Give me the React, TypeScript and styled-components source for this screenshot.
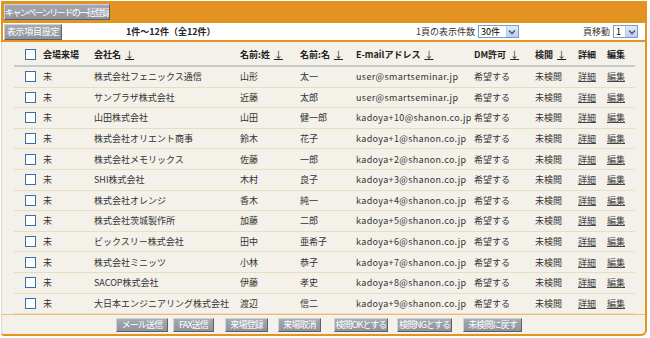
import React from "react";
import styled, { createGlobalStyle } from "styled-components";

const Global = createGlobalStyle`
  html, body { margin: 0; padding: 0; background: #fff; }
  body { font-family: "Noto Sans CJK JP", "Noto Sans", sans-serif; font-size: 9px; color: #333; }
`;

const ORANGE = "#e3931f";

const Root = styled.div`
  padding: 1px;
  width: 646px;
`;

const TopBar = styled.div`
  height: 22px;
  background: ${ORANGE};
  display: flex;
  align-items: center;
  padding: 0 3px;
`;

const GreyButton = styled.span<{ $w?: number; $ls?: number }>`
  display: inline-flex;
  align-items: center;
  justify-content: center;
  height: 14px;
  ${(p) => (p.$w ? `width: ${p.$w}px;` : "padding: 0 3px;")}
  background: linear-gradient(#a4a9b1, #8f949c);
  color: #fff;
  font-size: 9px;
  letter-spacing: ${(p) => p.$ls ?? -0.3}px;
  line-height: 1;
  white-space: nowrap;
  overflow: hidden;
  border: 1px solid;
  border-color: #cfd2d6 #5c6067 #5c6067 #cfd2d6;
  box-sizing: content-box;
`;

const InfoBar = styled.div`
  height: 17px;
  background: #fff;
  border-left: 2px solid ${ORANGE};
  border-right: 2px solid ${ORANGE};
  border-bottom: 2px solid ${ORANGE};
  display: flex;
  align-items: center;
  padding: 0 7px 0 1px;
`;

const Count = styled.span`
  font-weight: bold;
  color: #222;
  margin-left: 64px;
`;

const Spacer = styled.span`
  flex: 1;
`;

const Label = styled.span`
  color: #333;
  margin-right: 3px;
`;

const Select = styled.span<{ $w: number }>`
  display: inline-flex;
  align-items: center;
  justify-content: space-between;
  width: ${(p) => p.$w}px;
  height: 13px;
  border: 1px solid #7f9db9;
  background: #fff;
  box-sizing: border-box;
  padding-left: 2px;
  font-size: 9px;
  color: #000;
`;

const SelArrow = styled.span`
  display: inline-flex;
  align-items: center;
  justify-content: center;
  width: 11px;
  height: 11px;
  background: linear-gradient(#e3ecfd, #bccdf5);
  border-left: 1px solid #b9c9ef;
`;

const PageGroup = styled.span`
  display: inline-flex;
  align-items: center;
  margin-left: 64px;
`;

const Panel = styled.div`
  background: #f3f1e9;
  border-left: 1px solid #d8d6d0;
  border-right: 2px solid ${ORANGE};
  border-bottom: 2px solid ${ORANGE};
  border-bottom-right-radius: 6px;
  border-bottom-left-radius: 3px;
  padding-top: 2px;
`;

const Table = styled.table`
  border-collapse: collapse;
  margin: 0 13px 0 12px;
  width: 621px;
  table-layout: fixed;
`;

const Th = styled.th<{ $w: number }>`
  box-sizing: border-box;
  width: ${(p) => p.$w}px;
  text-align: left;
  font-weight: bold;
  color: #222;
  height: 22px;
  padding: 0 0 0 3px;
  border-bottom: 2px solid #c9c9c6;
  white-space: nowrap;
`;

const Td = styled.td<{ $mail?: boolean }>`
  height: 19.6px;
  padding: 0 0 0 3px;
  border-bottom: 1px solid #e6dfbf;
  white-space: nowrap;
  overflow: hidden;
  color: #333;
  ${(p) => (p.$mail ? "letter-spacing: 0.35px;" : "")}
`;

const CheckCell = styled.td`
  padding: 0 0 0 11px;
  border-bottom: 1px solid #e6dfbf;
`;

const CheckHead = styled.th`
  box-sizing: border-box;
  width: 26px;
  padding: 0 0 0 11px;
  border-bottom: 2px solid #c9c9c6;
`;

const Check = styled.span`
  display: block;
  width: 9px;
  height: 9px;
  border: 1px solid #3a6ea8;
  background: #fff;
`;

const Sort = styled.span`
  text-decoration: underline;
  font-weight: normal;
  margin-left: 4px;
`;

const Link = styled.span`
  text-decoration: underline;
  color: #444;
`;

const Footer = styled.div`
  border-top: 1px solid #ebbe7a;
  height: 19px;
  display: flex;
  align-items: center;
  padding-left: 114px;
`;

const FootBtn = styled(GreyButton)<{ $ml: number }>`
  margin-left: ${(p) => p.$ml}px;
  height: 12px;
  background: linear-gradient(#a7acb4, #8d929a);
`;

const Chevron = () => (
  <svg width="8" height="6" viewBox="0 0 8 6">
    <path d="M1 1.5 L4 4.5 L7 1.5" fill="none" stroke="#4d6185" strokeWidth="1.6" />
  </svg>
);

const rows = [
  ["株式会社フェニックス通信", "山形", "太一", "user@smartseminar.jp"],
  ["サンプラザ株式会社", "近藤", "太郎", "user@smartseminar.jp"],
  ["山田株式会社", "山田", "健一郎", "kadoya+10@shanon.co.jp"],
  ["株式会社オリエント商事", "鈴木", "花子", "kadoya+1@shanon.co.jp"],
  ["株式会社メモリックス", "佐藤", "一郎", "kadoya+2@shanon.co.jp"],
  ["SHI株式会社", "木村", "良子", "kadoya+3@shanon.co.jp"],
  ["株式会社オレンジ", "香木", "純一", "kadoya+4@shanon.co.jp"],
  ["株式会社茨城製作所", "加藤", "二郎", "kadoya+5@shanon.co.jp"],
  ["ビックスリー株式会社", "田中", "亜希子", "kadoya+6@shanon.co.jp"],
  ["株式会社ミニッツ", "小林", "恭子", "kadoya+7@shanon.co.jp"],
  ["SACOP株式会社", "伊藤", "孝史", "kadoya+8@shanon.co.jp"],
  ["大日本エンジニアリング株式会社", "渡辺", "信二", "kadoya+9@shanon.co.jp"],
];

const footButtons: [string, number, number][] = [
  ["メール送信", 0, 50],
  ["FAX送信", 5, 39],
  ["来場登録", 11, 41],
  ["来場取消", 10, 41],
  ["検閲OKとする", 13, 52],
  ["検閲NGとする", 9, 53],
  ["未検閲に戻す", 11, 57],
];

export default function App() {
  return (
    <Root>
      <Global />
      <TopBar>
        <GreyButton $w={104} $ls={-1.5}>
          キャンペーンリードの一括登録
        </GreyButton>
      </TopBar>
      <InfoBar>
        <GreyButton $w={56}>表示項目設定</GreyButton>
        <Count>1件～12件（全12件）</Count>
        <Spacer />
        <Label>1頁の表示件数</Label>
        <Select $w={41}>
          30件
          <SelArrow>
            <Chevron />
          </SelArrow>
        </Select>
        <PageGroup>
          <Label>頁移動</Label>
          <Select $w={25}>
            1
            <SelArrow>
              <Chevron />
            </SelArrow>
          </Select>
        </PageGroup>
      </InfoBar>
      <Panel>
        <Table>
          <thead>
            <tr>
              <CheckHead>
                <Check />
              </CheckHead>
              <Th $w={51}>会場来場</Th>
              <Th $w={146}>
                会社名<Sort>↓</Sort>
              </Th>
              <Th $w={60}>
                名前:姓<Sort>↓</Sort>
              </Th>
              <Th $w={56}>
                名前:名<Sort>↓</Sort>
              </Th>
              <Th $w={118}>
                E-mailアドレス<Sort>↓</Sort>
              </Th>
              <Th $w={61}>
                DM許可<Sort>↓</Sort>
              </Th>
              <Th $w={43}>
                検閲<Sort>↓</Sort>
              </Th>
              <Th $w={29}>詳細</Th>
              <Th $w={31}>編集</Th>
            </tr>
          </thead>
          <tbody>
            {rows.map((r, i) => (
              <tr key={i}>
                <CheckCell>
                  <Check />
                </CheckCell>
                <Td>未</Td>
                <Td>{r[0]}</Td>
                <Td>{r[1]}</Td>
                <Td>{r[2]}</Td>
                <Td $mail>{r[3]}</Td>
                <Td>希望する</Td>
                <Td>未検閲</Td>
                <Td>
                  <Link>詳細</Link>
                </Td>
                <Td>
                  <Link>編集</Link>
                </Td>
              </tr>
            ))}
          </tbody>
        </Table>
        <Footer>
          {footButtons.map(([t, ml, w]) => (
            <FootBtn key={t} $ml={ml} $w={w} $ls={-0.9}>
              {t}
            </FootBtn>
          ))}
        </Footer>
      </Panel>
    </Root>
  );
}
